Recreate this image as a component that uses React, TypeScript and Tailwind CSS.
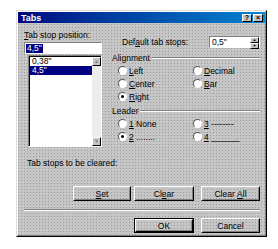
import React from "react";

const font = "font-['Liberation_Sans',Arial,sans-serif]";

function Radio({ checked }: { checked?: boolean }) {
  return (
    <span className="w-[9px] h-[9px] rounded-full bg-white border border-t-[#5a5a5a] border-l-[#5a5a5a] border-r-white border-b-white flex items-center justify-center shrink-0">
      {checked && <span className="w-[3px] h-[3px] rounded-full bg-black" />}
    </span>
  );
}

function Option({ checked, children }: { checked?: boolean; children: React.ReactNode }) {
  return (
    <div className="flex items-center gap-[1px] h-[13px]">
      <Radio checked={checked} />
      <span className="ml-[1px]">{children}</span>
    </div>
  );
}

function Btn({ w, children, def }: { w: string; children: React.ReactNode; def?: boolean }) {
  return (
    <div className={`${w} h-[15px] ${def ? "border border-black" : ""}`}>
      <div className="w-full h-full border border-t-white border-l-white border-r-black border-b-black">
        <div className="w-full h-full border border-transparent border-r-[#808080] border-b-[#808080] flex items-center justify-center whitespace-pre">
          {children}
        </div>
      </div>
    </div>
  );
}

function Group({ label, children }: { label: string; children: React.ReactNode }) {
  return (
    <div>
      <div className="flex items-center h-[10px]">
        <span className="mr-[2px]">{label}</span>
        <div className="flex-1 h-[2px] border-t border-t-[#808080] border-b border-b-white" />
      </div>
      {children}
    </div>
  );
}

export default function App() {
  return (
    <div className={`w-[278px] h-[249px] bg-white pl-[16px] pt-[10px] ${font} text-[8.5px] leading-[10px] text-black`}>
      <div className="w-[251px] h-[227px] bg-[#c6c6c6] bg-[radial-gradient(#9a9a9a_0.6px,transparent_0.8px)] bg-[length:3px_3px] border border-t-[#dfdfdf] border-l-[#dfdfdf] border-r-black border-b-black">
        <div className="w-full h-full border border-t-white border-l-white border-r-[#808080] border-b-[#808080] flex flex-col">
          {/* title bar */}
          <div className="h-[11px] bg-gradient-to-r from-[#000080] to-[#1084d0] flex items-center pl-[3px] pr-[2px]">
            <span className="text-white font-bold text-[9px]">Tabs</span>
            <div className="ml-auto flex gap-[1px]">
              <div className="w-[10px] h-[8px] bg-[#c3c3c3] border border-t-white border-l-white border-r-black border-b-black flex items-center justify-center text-[7px] font-bold leading-none">?</div>
              <div className="w-[10px] h-[8px] bg-[#c3c3c3] border border-t-white border-l-white border-r-black border-b-black flex items-center justify-center text-[7px] font-bold leading-none">×</div>
            </div>
          </div>

          {/* body */}
          <div className="flex-1 pl-[5px] pr-[5px]">
            <div className="flex">
              {/* left column */}
              <div className="w-[78px] ml-[1px] mt-[7px]">
                <div className="h-[10px]"><u>T</u>ab stop position:</div>
                <div className="mt-[2px] h-[12px] bg-white border border-t-[#808080] border-l-[#808080] border-r-white border-b-white flex items-center pl-[1px]">
                  <span className="bg-[#000080] text-white px-[1px] leading-[9px]">4,5"</span>
                </div>
                <div className="ml-[4px] mt-[1px] h-[92px] bg-white border border-t-[#808080] border-l-[#808080] border-r-white border-b-white flex">
                  <div className="flex-1 border-l border-t border-l-black border-t-black">
                    <div className="h-[9px] pl-[2px] leading-[9px]">0,38"</div>
                    <div className="h-[9px] pl-[2px] leading-[9px] bg-[#000080] text-white">4,5"</div>
                  </div>
                  <div className="w-[9px] flex flex-col bg-[#ececec] border-t border-t-black">
                    <div className="h-[9px] bg-[#c3c3c3] border border-t-white border-l-white border-r-black border-b-black flex items-center justify-center text-[5px] leading-none text-[#808080]">▲</div>
                    <div className="flex-1" />
                    <div className="h-[9px] bg-[#c3c3c3] border border-t-white border-l-white border-r-black border-b-black flex items-center justify-center text-[5px] leading-none text-[#808080]">▼</div>
                  </div>
                </div>
              </div>

              {/* right column */}
              <div className="ml-[10px] flex-1">
                <div className="mt-[13px] flex items-center">
                  <span className="ml-[10px]">Def<u>a</u>ult tab stops:</span>
                  <div className="ml-auto w-[51px] h-[12px] bg-white border border-t-[#808080] border-l-[#808080] border-r-white border-b-white flex">
                    <span className="pl-[2px] leading-[10px]">0,5"</span>
                    <div className="ml-auto w-[9px] flex flex-col">
                      <div className="flex-1 bg-[#c3c3c3] border border-t-white border-l-white border-r-black border-b-black flex items-center justify-center text-[4px] leading-none">▲</div>
                      <div className="flex-1 bg-[#c3c3c3] border border-t-white border-l-white border-r-black border-b-black flex items-center justify-center text-[4px] leading-none">▼</div>
                    </div>
                  </div>
                </div>

                <div className="mt-[5px]">
                  <Group label="Alignment">
                    <div className="grid grid-cols-[75px_1fr] ml-[6px] mt-[1px]">
                      <div>
                        <Option><u>L</u>eft</Option>
                        <Option><u>C</u>enter</Option>
                        <Option checked><u>R</u>ight</Option>
                      </div>
                      <div>
                        <Option><u>D</u>ecimal</Option>
                        <Option><u>B</u>ar</Option>
                      </div>
                    </div>
                  </Group>
                </div>

                <div className="mt-[3px]">
                  <Group label="Leader">
                    <div className="grid grid-cols-[75px_1fr] ml-[6px] mt-[1px]">
                      <div>
                        <Option><u>1</u> None</Option>
                        <Option checked><u>2</u> ........</Option>
                      </div>
                      <div>
                        <Option><u>3</u> --------</Option>
                        <Option><u>4</u> ______</Option>
                      </div>
                    </div>
                  </Group>
                </div>
              </div>
            </div>

            <div className="mt-[11px] ml-[4px]">Tab stops to be cleared:</div>

            <div className="mt-[18px] flex justify-end gap-[3px]">
              <Btn w="w-[58px]"><u>S</u>et</Btn>
              <Btn w="w-[60px]">Cl<u>e</u>ar</Btn>
              <div className="ml-[4px]">
                <Btn w="w-[59px]">{"Clear "}<u>A</u>ll</Btn>
              </div>
            </div>

            <div className="mt-[8px] ml-[1px] h-[2px] border-t border-t-[#808080] border-b border-b-white" />

            <div className="mt-[7px] flex justify-end gap-[7px]">
              <Btn w="w-[60px]" def>OK</Btn>
              <Btn w="w-[59px]">Cancel</Btn>
            </div>
          </div>
        </div>
      </div>
    </div>
  );
}
